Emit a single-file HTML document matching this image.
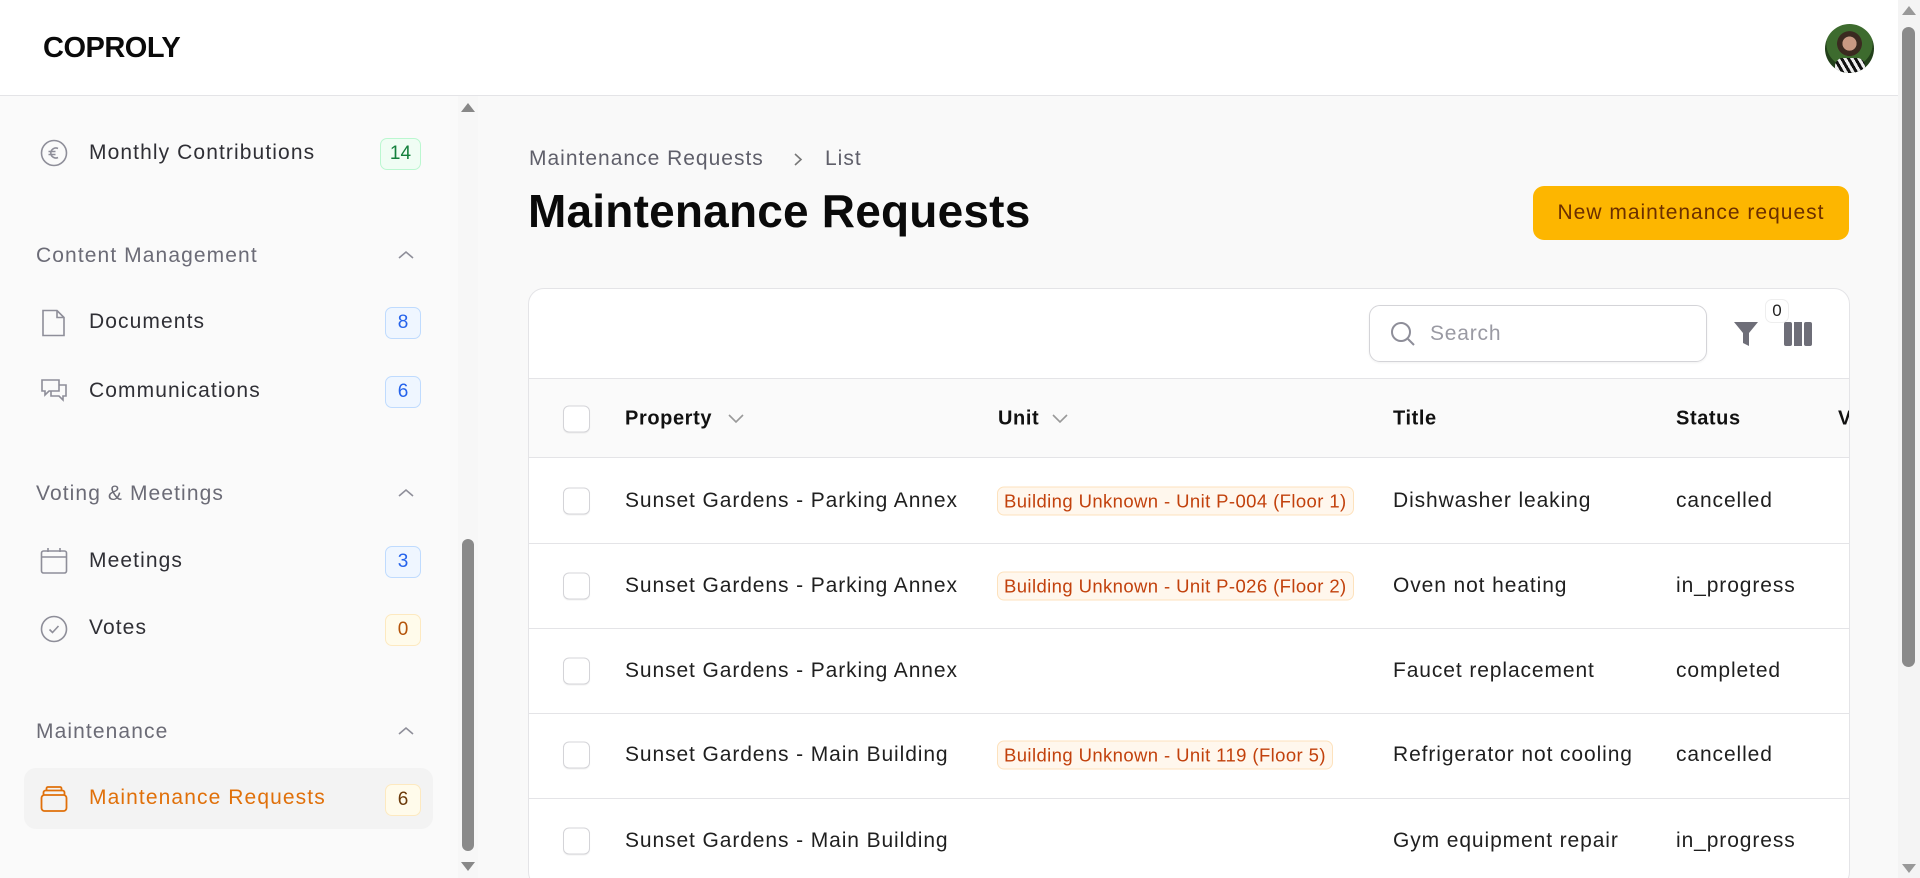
<!DOCTYPE html>
<html style="overflow:hidden;width:1920px;height:878px"><head><meta charset="utf-8"><style>
*{box-sizing:border-box;margin:0;padding:0}
body{width:1920px;height:878px;overflow:hidden;background:#f9f9f9;font-family:"Liberation Sans",sans-serif;position:relative;color:#1a1a1a}
.a{position:absolute}
.hdr{left:0;top:0;width:1898px;height:96px;background:#fff;border-bottom:1px solid #e4e4e7;z-index:5}
.logo{left:43px;top:32px;font-size:29px;font-weight:bold;letter-spacing:-0.5px;color:#0a0a0a}
.side{left:0;top:96px;width:458px;height:782px;background:#fafafa}
.strack{left:458px;top:96px;width:20px;height:782px;background:#f7f7f7}
.it{left:89px;font-size:21px;letter-spacing:1.1px;color:#2f2f35;transform:translateY(-50%);white-space:nowrap}
.sec{left:36px;font-size:21px;letter-spacing:1.1px;color:#6b6b76;transform:translateY(-50%);white-space:nowrap}
.chev{left:398px;width:16px;height:10px;transform:translateY(-50%)}
.ic{left:40px;width:28px;height:28px;transform:translateY(-50%)}
.bd{height:32px;border-radius:7px;font-size:19px;text-align:center;line-height:30px;transform:translateY(-50%);border:1px solid}
.g{background:#f0fdf4;border-color:#bbf7d0;color:#15803d}
.b{background:#eff6ff;border-color:#bfdbfe;color:#2563eb}
.y{background:#fffbeb;border-color:#fde9c0;color:#b45309}
.card{left:528px;top:288px;width:1322px;height:600px;background:#fff;border:1px solid #e4e4e7;border-radius:16px;overflow:hidden}
.th{font-size:20px;font-weight:bold;letter-spacing:0.6px;color:#111;transform:translateY(-50%)}
.td{font-size:21px;letter-spacing:0.9px;color:#1f1f1f;transform:translateY(-50%);white-space:nowrap}
.cb{left:34px;width:27px;height:27px;border:1px solid #d4d4d8;border-radius:6px;background:#fff;transform:translateY(-50%);box-shadow:0 1px 1px rgba(0,0,0,.06)}
.ub{left:468px;height:29px;padding:0 6px;border-radius:7px;background:#fff7ed;border:1px solid #fde2bd;color:#c2410c;font-size:18.5px;letter-spacing:0.4px;line-height:27px;transform:translateY(-50%);white-space:nowrap}
.rl{left:0;width:1322px;height:1px;background:#e4e4e7}
</style></head><body>
<div class="a hdr"><div class="a logo">COPROLY</div>
<div class="a" style="left:1825px;top:24px;width:49px;height:49px;border-radius:50%;background:radial-gradient(circle at 50% 40%,#c99a83 0 18%,#3a2a20 19% 32%,#3d6b2e 33% 60%,#22401a 61%);overflow:hidden"><div class="a" style="left:10px;top:34px;width:30px;height:16px;background:repeating-linear-gradient(60deg,#111 0 3px,#eee 3px 6px);border-radius:8px 8px 0 0"></div></div>
</div>
<div class="a side"></div>
<div class="a strack"></div>
<div class="a" style="left:461px;top:103px;width:0;height:0;border-left:7px solid transparent;border-right:7px solid transparent;border-bottom:9px solid #888"></div>
<div class="a" style="left:462px;top:539px;width:12px;height:312px;border-radius:6px;background:#8a8a8a"></div>
<div class="a" style="left:461px;top:862px;width:0;height:0;border-left:7px solid transparent;border-right:7px solid transparent;border-top:9px solid #888"></div>
<!-- sidebar -->
<svg class="a ic" style="top:153px" viewBox="0 0 28 28" fill="none" stroke="#8e8e99" stroke-width="1.6"><circle cx="14" cy="14" r="12.5"/><path d="M18 9.5a5 5 0 1 0 0 9M8.5 12.5h7M8.5 15.5h7"/></svg>
<div class="a it" style="top:153px">Monthly Contributions</div>
<div class="a bd g" style="left:380px;top:154px;width:41px">14</div>
<div class="a sec" style="top:256px">Content Management</div>
<svg class="a chev" style="top:255px" viewBox="0 0 16 10" fill="none" stroke="#8e8e99" stroke-width="1.6"><path d="M1 8l7-6 7 6"/></svg>
<svg class="a ic" style="top:323px" viewBox="0 0 28 28" fill="none" stroke="#8e8e99" stroke-width="1.6"><path d="M3 1.5h14l7 7v18H3z M17 1.5v7h7"/></svg>
<div class="a it" style="top:322px">Documents</div>
<div class="a bd b" style="left:385px;top:323px;width:36px">8</div>
<svg class="a ic" style="top:391px" viewBox="0 0 28 28" fill="none" stroke="#8e8e99" stroke-width="1.6"><path d="M2 3h17v11H9l-4 4v-4H2z M19 8h7v11h-3v4l-4-4h-8v-5"/></svg>
<div class="a it" style="top:391px">Communications</div>
<div class="a bd b" style="left:385px;top:392px;width:36px">6</div>
<div class="a sec" style="top:494px">Voting &amp; Meetings</div>
<svg class="a chev" style="top:493px" viewBox="0 0 16 10" fill="none" stroke="#8e8e99" stroke-width="1.6"><path d="M1 8l7-6 7 6"/></svg>
<svg class="a ic" style="top:561px" viewBox="0 0 28 28" fill="none" stroke="#8e8e99" stroke-width="1.6"><rect x="1.5" y="4" width="25" height="22" rx="2"/><path d="M1.5 10h25M8 1v4M20 1v4"/></svg>
<div class="a it" style="top:561px">Meetings</div>
<div class="a bd b" style="left:385px;top:562px;width:36px">3</div>
<svg class="a ic" style="top:629px" viewBox="0 0 28 28" fill="none" stroke="#8e8e99" stroke-width="1.6"><circle cx="14" cy="14" r="12.5"/><path d="M9.5 14.5l3 3 6-6.5"/></svg>
<div class="a it" style="top:628px">Votes</div>
<div class="a bd y" style="left:385px;top:630px;width:36px">0</div>
<div class="a sec" style="top:732px">Maintenance</div>
<svg class="a chev" style="top:731px" viewBox="0 0 16 10" fill="none" stroke="#8e8e99" stroke-width="1.6"><path d="M1 8l7-6 7 6"/></svg>
<div class="a" style="left:24px;top:768px;width:409px;height:61px;border-radius:12px;background:#f3f3f3"></div>
<svg class="a ic" style="top:799px" viewBox="0 0 28 28" fill="none" stroke="#e0700a" stroke-width="1.8"><rect x="1.5" y="10" width="25" height="16" rx="3"/><path d="M3.5 10V7.5a2 2 0 0 1 2-2h17a2 2 0 0 1 2 2V10M6.5 5.5V3.5a1.5 1.5 0 0 1 1.5-1.5h12a1.5 1.5 0 0 1 1.5 1.5v2"/></svg>
<div class="a it" style="top:798px;color:#e0700a">Maintenance Requests</div>
<div class="a bd y" style="left:385px;top:800px;width:36px;color:#6b3a0a">6</div>
<!-- page scrollbar -->
<div class="a" style="left:1898px;top:0;width:22px;height:878px;background:#f4f4f4"></div>
<div class="a" style="left:1902px;top:6px;width:0;height:0;border-left:7px solid transparent;border-right:7px solid transparent;border-bottom:9px solid #999"></div>
<div class="a" style="left:1902px;top:27px;width:13px;height:640px;border-radius:7px;background:#8a8a8a"></div>
<div class="a" style="left:1902px;top:864px;width:0;height:0;border-left:7px solid transparent;border-right:7px solid transparent;border-top:9px solid #999"></div>
<!-- main -->
<div class="a" style="left:529px;top:147px;font-size:21px;letter-spacing:1px;color:#5f5f6a">Maintenance Requests</div>
<svg class="a" style="left:793px;top:152px" width="10" height="15" viewBox="0 0 10 15" fill="none" stroke="#777" stroke-width="1.6"><path d="M2 2l6 5.5L2 13"/></svg>
<div class="a" style="left:825px;top:147px;font-size:21px;letter-spacing:1px;color:#5f5f6a">List</div>
<div class="a" style="left:528px;top:184px;font-size:46px;font-weight:bold;letter-spacing:0.2px;color:#0a0a0a">Maintenance Requests</div>
<div class="a" style="left:1533px;top:186px;width:316px;height:54px;border-radius:11px;background:#fdb600;color:#6b2f00;font-size:21px;letter-spacing:1px;text-align:center;line-height:54px">New maintenance request</div>
<div class="a card">
 <div class="a" style="left:840px;top:16px;width:338px;height:57px;border:1px solid #d4d4d8;border-radius:11px;box-shadow:0 1px 2px rgba(0,0,0,.06)">
  <svg class="a" style="left:20px;top:15px" width="26" height="26" viewBox="0 0 26 26" fill="none" stroke="#8e8e99" stroke-width="2"><circle cx="11" cy="11" r="9"/><path d="M18 18l6 6"/></svg>
  <div class="a" style="left:60px;top:16px;font-size:21px;letter-spacing:0.8px;color:#9a9aa3">Search</div>
 </div>
 <svg class="a" style="left:1203px;top:31px" width="28" height="28" viewBox="0 0 28 28" fill="#6e6e78"><path d="M2 2h24l-9 11v13l-6-3V13z"/></svg>
 <div class="a" style="left:1236px;top:10px;width:24px;height:24px;border-radius:7px;background:#fff;border:1px solid #eee;font-size:17px;text-align:center;line-height:22px;color:#222">0</div>
 <svg class="a" style="left:1255px;top:33px" width="28" height="24" viewBox="0 0 28 24" fill="#6e6e78"><rect x="0" y="0" width="8" height="24" rx="2"/><rect x="10" y="0" width="8" height="24"/><rect x="20" y="0" width="8" height="24" rx="2"/></svg>
 <div class="a" style="left:0;top:89px;width:1322px;height:80px;background:#fafafa;border-top:1px solid #e4e4e7;border-bottom:1px solid #e4e4e7"></div>
 <div class="a cb" style="top:130px"></div>
 <div class="a th" style="left:96px;top:130px">Property</div>
 <svg class="a" style="left:199px;top:125px" width="16" height="10" viewBox="0 0 16 10" fill="none" stroke="#999" stroke-width="1.6"><path d="M1 1l7 7 7-7"/></svg>
 <div class="a th" style="left:469px;top:130px">Unit</div>
 <svg class="a" style="left:523px;top:125px" width="16" height="10" viewBox="0 0 16 10" fill="none" stroke="#999" stroke-width="1.6"><path d="M1 1l7 7 7-7"/></svg>
 <div class="a th" style="left:864px;top:130px">Title</div>
 <div class="a th" style="left:1147px;top:130px">Status</div>
 <div class="a th" style="left:1309px;top:130px">V</div>

 <div class="a cb" style="top:212px"></div>
 <div class="a td" style="left:96px;top:212px">Sunset Gardens - Parking Annex</div>
 <div class="a ub" style="top:212px">Building Unknown - Unit P-004 (Floor 1)</div>
 <div class="a td" style="left:864px;top:212px">Dishwasher leaking</div>
 <div class="a td" style="left:1147px;top:212px">cancelled</div>
 <div class="a rl" style="top:254px"></div>

 <div class="a cb" style="top:297px"></div>
 <div class="a td" style="left:96px;top:297px">Sunset Gardens - Parking Annex</div>
 <div class="a ub" style="top:297px">Building Unknown - Unit P-026 (Floor 2)</div>
 <div class="a td" style="left:864px;top:297px">Oven not heating</div>
 <div class="a td" style="left:1147px;top:297px">in_progress</div>
 <div class="a rl" style="top:339px"></div>

 <div class="a cb" style="top:382px"></div>
 <div class="a td" style="left:96px;top:382px">Sunset Gardens - Parking Annex</div>
 <div class="a td" style="left:864px;top:382px">Faucet replacement</div>
 <div class="a td" style="left:1147px;top:382px">completed</div>
 <div class="a rl" style="top:424px"></div>

 <div class="a cb" style="top:466px"></div>
 <div class="a td" style="left:96px;top:466px">Sunset Gardens - Main Building</div>
 <div class="a ub" style="top:466px">Building Unknown - Unit 119 (Floor 5)</div>
 <div class="a td" style="left:864px;top:466px">Refrigerator not cooling</div>
 <div class="a td" style="left:1147px;top:466px">cancelled</div>
 <div class="a rl" style="top:509px"></div>

 <div class="a cb" style="top:552px"></div>
 <div class="a td" style="left:96px;top:552px">Sunset Gardens - Main Building</div>
 <div class="a td" style="left:864px;top:552px">Gym equipment repair</div>
 <div class="a td" style="left:1147px;top:552px">in_progress</div>
</div>
</body></html>
